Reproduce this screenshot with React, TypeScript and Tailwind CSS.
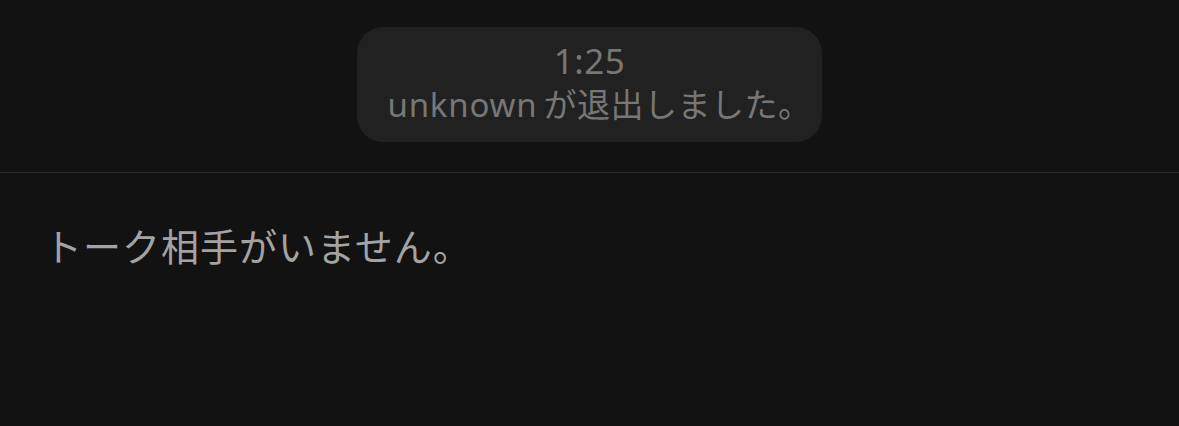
import React from "react";

export default function App() {
  const font = { fontFamily: '"Noto Sans", "Noto Sans CJK JP", sans-serif' };
  return (
    <div className="w-[1179px] h-[426px] bg-[#121212] flex flex-col" style={font}>
      <div className="h-[172px] flex justify-center pt-[27px]">
        <div className="w-[465px] h-[115px] rounded-[26px] bg-[#212121] flex flex-col items-center pt-[11px]">
          <div className="text-[35px] leading-[46px] text-[#777777] tracking-[0.5px]">1:25</div>
          <div className="leading-[42px] text-[#777777] flex items-baseline pl-[20px]">
            <span className="text-[33px] tracking-[0.8px] mr-[6px]">unknown</span>
            <span className="text-[33px] tracking-[0.5px]">が退出しました。</span>
          </div>
        </div>
      </div>
      <div className="h-px bg-[#2a2a2a]" />
      <div className="pl-[44px] pt-[48px] text-[38px] leading-[50px] tracking-[1px] text-[#a3a3a3]">
        トーク相手がいません。
      </div>
    </div>
  );
}
